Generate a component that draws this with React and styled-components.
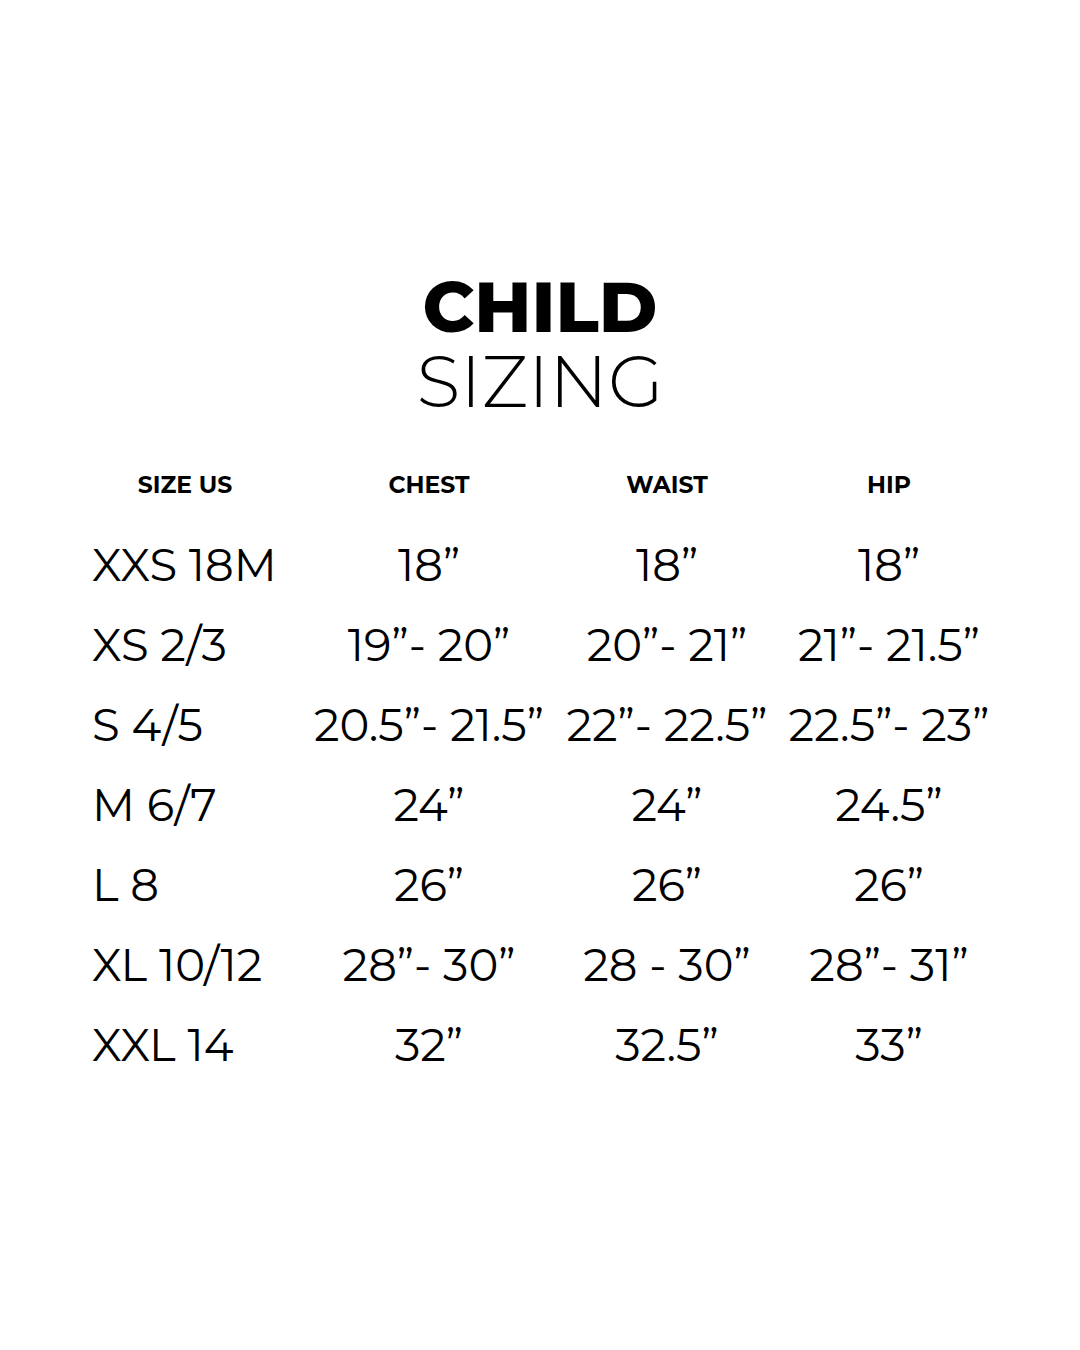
import styled, { createGlobalStyle } from "styled-components";

const GlobalStyle = createGlobalStyle`
  html, body {
    margin: 0;
    padding: 0;
    background: #ffffff;
  }
  body {
    font-family: Montserrat, Inter, "Open Sans", sans-serif;
    color: #000000;
  }
`;

const Page = styled.main`
  width: 1080px;
  height: 1350px;
  box-sizing: border-box;
  padding-top: 270px;
  display: flex;
  flex-direction: column;
  align-items: center;
`;

const Title = styled.h1`
  margin: 0;
  display: flex;
  flex-direction: column;
  align-items: center;
  font-weight: normal;
`;

const TitleBold = styled.span`
  font-size: 71px;
  line-height: 74px;
  font-weight: 800;
`;

const TitleLight = styled.span`
  font-size: 72px;
  line-height: 74px;
  font-weight: 300;
`;

const Table = styled.div`
  align-self: stretch;
  margin-top: 26px;
  padding-left: 92px;
  display: grid;
  grid-template-columns: 186px 302px 174px 270px;
  grid-auto-rows: 80px;
`;

const Cell = styled.div`
  display: flex;
  align-items: center;
  justify-content: ${(p) => (p.$left ? "flex-start" : "center")};
  white-space: nowrap;
  font-size: ${(p) => (p.$head ? "23.5px" : "45px")};
  font-weight: ${(p) => (p.$head ? 700 : 400)};
`;

const heads = ["SIZE US", "CHEST", "WAIST", "HIP"];

const rows = [
  ["XXS 18M", "18”", "18”", "18”"],
  ["XS 2/3", "19”- 20”", "20”- 21”", "21”- 21.5”"],
  ["S 4/5", "20.5”- 21.5”", "22”- 22.5”", "22.5”- 23”"],
  ["M 6/7", "24”", "24”", "24.5”"],
  ["L 8", "26”", "26”", "26”"],
  ["XL 10/12", "28”- 30”", "28 - 30”", "28”- 31”"],
  ["XXL 14", "32”", "32.5”", "33”"],
];

export default function App() {
  return (
    <>
      <GlobalStyle />
      <Page>
        <Title>
          <TitleBold>CHILD</TitleBold>
          <TitleLight>SIZING</TitleLight>
        </Title>
        <Table>
          {heads.map((h) => (
            <Cell key={h} $head>
              {h}
            </Cell>
          ))}
          {rows.map((row) =>
            row.map((value, i) => (
              <Cell key={row[0] + i} $left={i === 0}>
                {value}
              </Cell>
            ))
          )}
        </Table>
      </Page>
    </>
  );
}
